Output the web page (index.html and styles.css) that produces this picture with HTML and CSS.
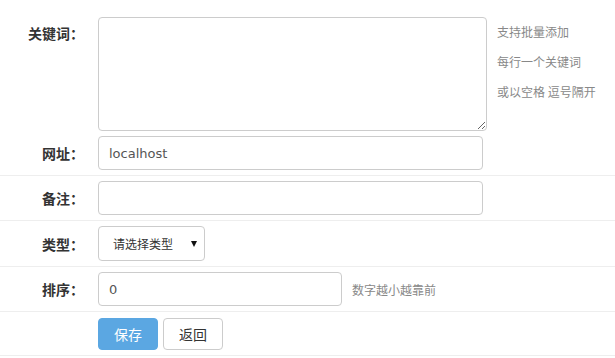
FILE: index.html
```html
<!DOCTYPE html>
<html lang="zh-CN">
<head>
<meta charset="utf-8">
<title>添加关键词</title>
<link rel="stylesheet" href="styles.css">
</head>
<body>
<form class="form">
  <div class="row row-first">
    <label class="lbl lbl-top">关键词：</label>
    <div class="ctrl ctrl-top">
      <textarea class="ta"></textarea>
      <div class="hints">
        <p>支持批量添加</p>
        <p>每行一个关键词</p>
        <p>或以空格 逗号隔开</p>
      </div>
    </div>
  </div>
  <div class="row">
    <label class="lbl">网址：</label>
    <div class="ctrl"><input class="inp inp-wide" type="text" value="localhost"></div>
  </div>
  <div class="row sep">
    <label class="lbl">备注：</label>
    <div class="ctrl"><input class="inp inp-wide" type="text" value=""></div>
  </div>
  <div class="row sep">
    <label class="lbl">类型：</label>
    <div class="ctrl">
      <div class="sel-wrap">
        <select class="sel"><option>请选择类型</option></select>
      </div>
    </div>
  </div>
  <div class="row sep">
    <label class="lbl">排序：</label>
    <div class="ctrl">
      <input class="inp inp-short" type="text" value="0">
      <span class="hint-inline">数字越小越靠前</span>
    </div>
  </div>
  <div class="row sep row-btn">
    <span class="lbl"></span>
    <div class="ctrl btns">
      <button type="button" class="btn btn-primary">保存</button>
      <button type="button" class="btn btn-default">返回</button>
    </div>
  </div>
</form>
</body>
</html>
```
FILE: styles.css
```css
html, body {
  margin: 0;
  padding: 0;
  background: #fff;
}
body {
  font-family: "DejaVu Sans", "Noto Sans CJK SC", sans-serif;
  color: #333;
}
.form {
  width: 615px;
}
.row {
  display: grid;
  grid-template-columns: 84px 1fr;
  column-gap: 14px;
  align-items: center;
  padding: 5px 0;
}
.row-first {
  padding: 17px 0 0;
  align-items: start;
}
.sep {
  border-top: 1px solid #eee;
}
.row-btn {
  padding: 6px 0 5px;
  border-bottom: 1px solid #eee;
}
.lbl {
  text-align: right;
  font-family: "Noto Sans CJK SC", sans-serif;
  font-size: 14px;
  font-weight: bold;
  color: #333;
  line-height: 20px;
}
.lbl-top {
  padding-top: 6px;
}
.ctrl {
  display: flex;
  align-items: center;
}
.ctrl-top {
  align-items: flex-start;
}
.ta {
  box-sizing: border-box;
  width: 389px;
  height: 114px;
  margin: 0;
  border: 1px solid #ccc;
  border-radius: 4px;
  padding: 6px 10px;
  font-family: "DejaVu Sans", sans-serif;
  font-size: 13px;
}
.hints {
  margin-left: 10px;
  font-family: "Noto Sans CJK SC", sans-serif;
  font-size: 12px;
  color: #888;
}
.hints p {
  margin: 0;
  line-height: 30px;
}
.inp {
  box-sizing: border-box;
  height: 34px;
  margin: 0;
  border: 1px solid #ccc;
  border-radius: 4px;
  padding: 0 10px;
  font-family: "DejaVu Sans", "Noto Sans CJK SC", sans-serif;
  font-size: 13px;
  color: #555;
  background: #fff;
}
.inp-wide {
  width: 385px;
}
.inp-short {
  width: 244px;
}
.hint-inline {
  margin-left: 10px;
  font-family: "Noto Sans CJK SC", sans-serif;
  font-size: 12px;
  color: #888;
}
.sel-wrap {
  position: relative;
  width: 107px;
}
.sel-wrap::after {
  content: "";
  position: absolute;
  left: 93px;
  top: 15px;
  border-left: 3px solid transparent;
  border-right: 3px solid transparent;
  border-top: 6px solid #111;
  pointer-events: none;
}
.sel {
  -webkit-appearance: none;
  appearance: none;
  box-sizing: border-box;
  width: 107px;
  height: 35px;
  margin: 0;
  border: 1px solid #ccc;
  border-radius: 4px;
  padding: 0 0 0 14px;
  background: #fff;
  font-family: "Noto Sans CJK SC", sans-serif;
  font-size: 12px;
  color: #333;
}
.btns {
  gap: 5px;
}
.btn {
  box-sizing: border-box;
  width: 60px;
  height: 32px;
  margin: 0;
  border-radius: 4px;
  font-family: "Noto Sans CJK SC", sans-serif;
  font-size: 14px;
  padding: 0;
  cursor: pointer;
}
.btn-primary {
  background: #5ba7e2;
  border: 1px solid #5ba7e2;
  color: #fff;
}
.btn-default {
  background: #fff;
  border: 1px solid #ccc;
  color: #333;
}
```
